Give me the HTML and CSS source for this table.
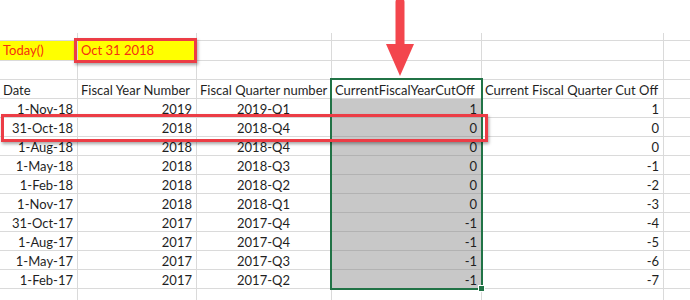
FILE: index.html
```html
<!DOCTYPE html>
<html>
<head>
<meta charset="utf-8">
<link rel="stylesheet" href="styles.css">
</head>
<body>
<div class="sheet">
  <div class="grid">
    <div class="c"></div><div class="c"></div><div class="c"></div><div class="c"></div><div class="c"></div><div class="c last"></div>

    <div class="c today l">Today()</div><div class="c today l">Oct 31 2018</div><div class="c"></div><div class="c"></div><div class="c"></div><div class="c last"></div>

    <div class="c"></div><div class="c"></div><div class="c"></div><div class="c"></div><div class="c"></div><div class="c last"></div>

    <div class="c l">Date</div><div class="c l">Fiscal Year Number</div><div class="c l">Fiscal Quarter number</div><div class="c l hd">CurrentFiscalYearCutOff</div><div class="c l">Current Fiscal Quarter Cut Off</div><div class="c last"></div>

    <div class="c r">1-Nov-18</div><div class="c r">2019</div><div class="c m">2019-Q1</div><div class="c r sel">1</div><div class="c r">1</div><div class="c last"></div>
    <div class="c r">31-Oct-18</div><div class="c r">2018</div><div class="c m">2018-Q4</div><div class="c r sel">0</div><div class="c r">0</div><div class="c last"></div>
    <div class="c r">1-Aug-18</div><div class="c r">2018</div><div class="c m">2018-Q4</div><div class="c r sel">0</div><div class="c r">0</div><div class="c last"></div>
    <div class="c r">1-May-18</div><div class="c r">2018</div><div class="c m">2018-Q3</div><div class="c r sel">0</div><div class="c r">-1</div><div class="c last"></div>
    <div class="c r">1-Feb-18</div><div class="c r">2018</div><div class="c m">2018-Q2</div><div class="c r sel">0</div><div class="c r">-2</div><div class="c last"></div>
    <div class="c r">1-Nov-17</div><div class="c r">2018</div><div class="c m">2018-Q1</div><div class="c r sel">0</div><div class="c r">-3</div><div class="c last"></div>
    <div class="c r">31-Oct-17</div><div class="c r">2017</div><div class="c m">2017-Q4</div><div class="c r sel">-1</div><div class="c r">-4</div><div class="c last"></div>
    <div class="c r">1-Aug-17</div><div class="c r">2017</div><div class="c m">2017-Q4</div><div class="c r sel">-1</div><div class="c r">-5</div><div class="c last"></div>
    <div class="c r">1-May-17</div><div class="c r">2017</div><div class="c m">2017-Q3</div><div class="c r sel">-1</div><div class="c r">-6</div><div class="c last"></div>
    <div class="c r">1-Feb-17</div><div class="c r">2017</div><div class="c m">2017-Q2</div><div class="c r sel">-1</div><div class="c r">-7</div><div class="c last"></div>

    <div class="c"></div><div class="c"></div><div class="c"></div><div class="c"></div><div class="c"></div><div class="c last"></div>
  </div>

  <div class="selbox"><span class="handle"></span></div>
  <div class="redbox datebox"></div>
  <div class="redbox rowbox"></div>
  <svg class="arrow" width="32" height="80" viewBox="0 0 32 80">
    <path d="M15 2 L15 46" stroke="#f3464d" stroke-width="9" stroke-linecap="round" fill="none"/>
    <path d="M1 44 L29 44 L15 76 Z" fill="#f3464d"/>
  </svg>
</div>
</body>
</html>
```

FILE: styles.css
```css
html, body {
  margin: 0;
  padding: 0;
  background: #ffffff;
}

.sheet {
  position: relative;
  width: 690px;
  height: 300px;
  overflow: hidden;
  padding-top: 33px;
  box-sizing: border-box;
  font-family: Lato, "Open Sans", sans-serif;
  font-size: 13px;
  color: #1f1f1f;
}

.grid {
  display: grid;
  grid-template-columns: 78px 119px 135px 150px 182px 1fr;
  grid-template-rows: 8px 20px repeat(12, 19px) 20px;
}

.c {
  box-sizing: border-box;
  border-right: 1px solid #dadada;
  border-bottom: 1px solid #dadada;
  line-height: 18px;
  white-space: nowrap;
  overflow: visible;
  padding: 1px 4px 0 3px;
}

.c.last {
  border-right: none;
}

.l { text-align: left; }
.r { text-align: right; }
.m { text-align: center; }

.today {
  background: #ffff00;
  color: #f5300f;
  line-height: 19px;
  padding-top: 0;
}

.sel {
  background: #c8c8c8;
  border-bottom-color: #b2b2b2;
}

.selbox {
  position: absolute;
  left: 330px;
  top: 78px;
  width: 153px;
  height: 212px;
  box-sizing: border-box;
  border: 2px solid #217346;
}

.handle {
  position: absolute;
  right: -4px;
  bottom: -4px;
  width: 5px;
  height: 5px;
  background: #217346;
  border: 1px solid #ffffff;
}

.redbox {
  position: absolute;
  box-sizing: border-box;
  border: 3px solid #ec3d46;
  box-shadow: 1px 2px 3px rgba(0, 0, 0, 0.35);
}

.datebox {
  left: 74px;
  top: 38px;
  width: 123px;
  height: 25px;
}

.rowbox {
  left: 1px;
  top: 114px;
  width: 487px;
  height: 28px;
}

.arrow {
  position: absolute;
  left: 385px;
  top: 0;
}
```
